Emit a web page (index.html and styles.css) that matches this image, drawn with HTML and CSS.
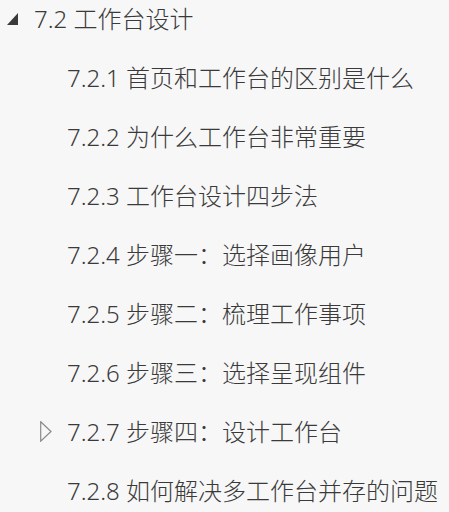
FILE: index.html
```html
<!DOCTYPE html>
<html lang="zh">
<head>
<meta charset="utf-8">
<link rel="stylesheet" href="styles.css">
</head>
<body>
<div class="tree">
  <div class="row top">
    <span class="tw"><svg width="11" height="12" viewBox="0 0 11 12"><polygon points="11,0 11,12 0,12" fill="#3a3a3a"/></svg></span>
    <span class="label">7.2 工作台设计</span>
  </div>
  <div class="children">
    <div class="row child"><span class="ctw"></span><span class="label">7.2.1 首页和工作台的区别是什么</span></div>
    <div class="row child"><span class="ctw"></span><span class="label">7.2.2 为什么工作台非常重要</span></div>
    <div class="row child"><span class="ctw"></span><span class="label">7.2.3 工作台设计四步法</span></div>
    <div class="row child"><span class="ctw"></span><span class="label">7.2.4 步骤一：选择画像用户</span></div>
    <div class="row child"><span class="ctw"></span><span class="label">7.2.5 步骤二：梳理工作事项</span></div>
    <div class="row child"><span class="ctw"></span><span class="label">7.2.6 步骤三：选择呈现组件</span></div>
    <div class="row child"><span class="ctw"><svg width="12" height="21" viewBox="0 0 12 21"><polygon points="0.7,0.8 11,10.5 0.7,20.2" fill="none" stroke="#8a8a8a" stroke-width="1.2"/></svg></span><span class="label">7.2.7 步骤四：设计工作台</span></div>
    <div class="row child"><span class="ctw"></span><span class="label">7.2.8 如何解决多工作台并存的问题</span></div>
  </div>
</div>
</body>
</html>
```
FILE: styles.css
```css
html, body {
  margin: 0;
  padding: 0;
  background: #f7f7f7;
}
body {
  width: 449px;
  height: 512px;
  overflow: hidden;
  font-family: "Noto Sans", "Noto Sans CJK SC", sans-serif;
  font-size: 24px;
  font-weight: 300;
  color: #3a3a3a;
}
.tree {
  display: flex;
  flex-direction: column;
}
.row {
  display: flex;
  align-items: center;
  white-space: nowrap;
}
.top {
  height: 38px;
  padding-left: 7px;
}
.tw {
  width: 27px;
  display: flex;
  align-items: center;
}
.children {
  padding-top: 10px;
}
.child {
  height: 59px;
  padding-left: 40px;
}
.ctw {
  width: 27px;
  display: flex;
  align-items: center;
}
.label {
  line-height: 1;
}
```
